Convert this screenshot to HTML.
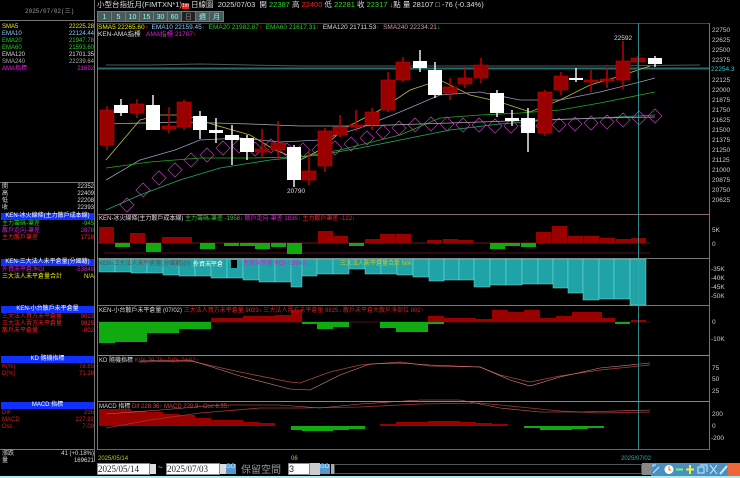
<!DOCTYPE html>
<html><head><meta charset="utf-8"><style>
*{margin:0;padding:0;box-sizing:border-box}
body{width:740px;height:478px;background:#000;overflow:hidden;position:relative;font-family:"Liberation Sans","Noto Sans CJK TC",sans-serif;color:#ddd}
.a{position:absolute;white-space:nowrap}
.s{font-size:6px;line-height:7px;font-family:"Liberation Mono","Noto Sans CJK TC",monospace}
.hd{position:absolute;left:1px;width:93px;height:7px;background:#1030ff;color:#fff;font-size:6px;line-height:7px;text-align:center}
.row{position:absolute;left:2px;width:92px;font-size:6px;line-height:7px}
.row b{font-weight:normal;float:right}
.btn{position:absolute;top:11px;width:15px;height:11px;background:#4a5a5a;color:#8fe;font-size:7px;line-height:11px;text-align:center;border:1px solid #777}
</style></head><body>
<div class="a" style="left:0;top:0;width:95px;height:462px;border-right:1px solid #777"></div>
<div class="a" style="left:0;top:20px;width:95px;height:1px;background:#777"></div>
<div class="a s" style="left:25px;top:8px;color:#999">2025/07/02(三)</div>
<div class="row" style="top:24px;color:#ee0">SMA5<b>22225.28</b></div>
<div class="row" style="top:31px;color:#8cf">EMA10<b>22124.44</b></div>
<div class="row" style="top:38px;color:#2c2">EMA20<b>21947.78</b></div>
<div class="row" style="top:45px;color:#2c2">EMA60<b>21593.60</b></div>
<div class="row" style="top:52px;color:#ddd">EMA120<b>21701.35</b></div>
<div class="row" style="top:59px;color:#aaa">SMA240<b>22239.64</b></div>
<div class="row" style="top:66px;color:#d2d">AMA指標<b>21692</b></div>
<div class="a" style="left:0;top:182px;width:95px;height:1px;background:#777"></div>
<div class="row" style="top:184px">開<b>22352</b></div>
<div class="row" style="top:191px">高<b>22409</b></div>
<div class="row" style="top:198px">低<b>22208</b></div>
<div class="row" style="top:205px">收<b>22393</b></div>
<div class="hd" style="top:213px">KEN-冰火線條(主力散戶成本線)</div>
<div class="row" style="top:221px;color:#2c2">主力籌碼-筆差<b>-945</b></div>
<div class="row" style="top:228px;color:#c2c">散戶走向-筆差<b>2878</b></div>
<div class="row" style="top:235px;color:#e22">主力散戶筆差<b>1728</b></div>
<div class="hd" style="top:259px">KEN-三大法人未平倉量(分國籍)</div>
<div class="row" style="top:267px;color:#c2c">外資未平倉淨OI<b>-53848</b></div>
<div class="row" style="top:274px;color:#ee0">三大法人未平倉量合計<b>N/A</b></div>
<div class="hd" style="top:306px">KEN-小台散戶未平倉量</div>
<div class="row" style="top:314px;color:#e22">三大法人買方未平倉量<b>9023</b></div>
<div class="row" style="top:321px;color:#e22">三大法人賣方未平倉量<b>9825</b></div>
<div class="row" style="top:328px;color:#e22">散戶未平倉量<b>-802</b></div>
<div class="hd" style="top:356px">KD 隨機指標</div>
<div class="row" style="top:364px;color:#c22">K(%)<b>78.85</b></div>
<div class="row" style="top:371px;color:#c22">D(%)<b>71.38</b></div>
<div class="hd" style="top:402px">MACD 指標</div>
<div class="row" style="top:410px;color:#c22">DIF<b>235</b></div>
<div class="row" style="top:417px;color:#c22">MACD<b>227.92</b></div>
<div class="row" style="top:424px;color:#c22">Osc<b>7.09</b></div>
<div class="a" style="left:0;top:449px;width:95px;height:1px;background:#777"></div>
<div class="row" style="top:451px">漲跌<b>41 (+0.18%)</b></div>
<div class="row" style="top:458px">量<b>169621</b></div>

<div class="a" style="left:97px;top:0;font-size:7.5px;line-height:9px;color:#ddd">小型台指近月(FIMTXN*1)<span style="background:#d22;color:#fff;font-size:5px">1m</span> 日線圖 &nbsp;2025/07/03 &nbsp;開 <span style="color:#2d2">22387</span> 高 <span style="color:#e22">22400</span> 低 <span style="color:#2d2">22281</span> 收 <span style="color:#2d2">22317</span> <span style="color:#2d2">↓</span>點 量 28107 □ -76 (-0.34%)</div>
<div class="btn" style="left:97px">1</div><div class="btn" style="left:111px">5</div><div class="btn" style="left:125px">10</div><div class="btn" style="left:139px">15</div><div class="btn" style="left:153px">30</div><div class="btn" style="left:167px">60</div><div class="btn" style="left:181px;background:#222;color:#888">日</div><div class="btn" style="left:195px">週</div><div class="btn" style="left:209px">月</div>

<div class="a" style="left:98px;top:24px;font-size:6.5px;line-height:7px"><span style="color:#ee0">SMA5 22265.60</span><span style="color:#e22">↑</span> &nbsp;<span style="color:#8cf">EMA10 22159.45</span><span style="color:#e22">↑</span> &nbsp;<span style="color:#2c2">EMA20 21982.87</span><span style="color:#e22">↑</span> &nbsp;<span style="color:#2c2">EMA60 21617.31</span><span style="color:#e22">↑</span> &nbsp;<span style="color:#ddd">EMA120 21711.53</span><span style="color:#e22">↑</span> &nbsp;<span style="color:#c9a">SMA240 22234.21</span><span style="color:#2c2">↓</span></div>
<div class="a" style="left:98px;top:31px;font-size:6.5px;line-height:7px">KEN-AMA指標 &nbsp;&nbsp;<span style="color:#d2d">AMA指標 21707</span><span style="color:#e22">↑</span></div>

<svg class="a" style="left:0;top:0" width="740" height="478" viewBox="0 0 740 478">
<g stroke="#666" fill="none">
<line x1="97" y1="23.5" x2="710" y2="23.5" stroke="#634"/>
<line x1="97" y1="214.5" x2="710" y2="214.5" stroke="#867"/>
<line x1="97" y1="258.5" x2="710" y2="258.5" stroke="#777"/>
<line x1="97" y1="305.5" x2="710" y2="305.5" stroke="#777"/>
<line x1="97" y1="355.5" x2="710" y2="355.5" stroke="#888"/>
<line x1="97" y1="401.5" x2="710" y2="401.5" stroke="#888"/>
<line x1="97" y1="449.5" x2="710" y2="449.5" stroke="#666"/>
<line x1="97.5" y1="23" x2="97.5" y2="450" stroke="#777"/>
<line x1="709.5" y1="23" x2="709.5" y2="450" stroke="#777"/>
</g>
<polyline points="106,65 150,65 200,64 300,66 370,66 600,66 700,65" stroke="#555" fill="none"/>
<line x1="98" y1="68.5" x2="709" y2="68.5" stroke="#1a7070" stroke-width="2"/>
<g stroke="#a3a" fill="none" stroke-width=".8">
<path d="M120,205l7-7 7,7-7,7z M136,190l7-7 7,7-7,7z M152,178l7-7 7,7-7,7z M168,170l7-7 7,7-7,7z M184,160l7-7 7,7-7,7z M200,155l7-7 7,7-7,7z M216,148l7-7 7,7-7,7z M232,146l7-7 7,7-7,7z M248,149l7-7 7,7-7,7z M264,146l7-7 7,7-7,7z M280,150l7-7 7,7-7,7z M296,150l7-7 7,7-7,7z M312,150l7-7 7,7-7,7z M328,148l7-7 7,7-7,7z M344,144l7-7 7,7-7,7z M360,138l7-7 7,7-7,7z M376,132l7-7 7,7-7,7z M392,128l7-7 7,7-7,7z M408,125l7-7 7,7-7,7z M424,124l7-7 7,7-7,7z M440,124l7-7 7,7-7,7z M456,125l7-7 7,7-7,7z M472,125l7-7 7,7-7,7z M488,126l7-7 7,7-7,7z M504,126l7-7 7,7-7,7z M520,126l7-7 7,7-7,7z M536,126l7-7 7,7-7,7z M552,125l7-7 7,7-7,7z M568,124l7-7 7,7-7,7z M584,123l7-7 7,7-7,7z M600,122l7-7 7,7-7,7z M616,120l7-7 7,7-7,7z M632,118l7-7 7,7-7,7z M648,116l7-7 7,7-7,7z"/>
</g>
<g fill="none" stroke-width=".8">
<polyline stroke="#bb4" points="106,160 140,120 160,115 185,115 215,125 250,135 275,150 300,160 320,150 345,128 380,110 410,90 440,80 470,95 500,102 530,112 560,100 590,85 620,76 650,66"/>
<polyline stroke="#99b" points="106,180 140,160 175,150 200,140 240,138 280,142 320,140 360,128 400,112 440,95 480,92 520,100 560,100 600,92 640,82 655,78"/>
<polyline stroke="#2a2" points="106,168 150,162 200,158 250,158 300,157 340,150 400,135 440,118 480,115 520,113 560,110 600,103 640,95 655,92"/>
<polyline stroke="#2a6" points="106,210 140,195 180,180 220,168 270,160 320,155 360,148 400,140 450,130 500,124 550,120 600,118 655,115"/>
<polyline stroke="#aaa" points="106,124 180,122 250,124 300,126 360,126 420,124 480,122 540,120 600,118 655,117"/>
</g>
<g stroke-width="1.4">
<g stroke="#c00"><line x1="107" y1="106" x2="107" y2="150"/><line x1="137" y1="99" x2="137" y2="118"/><line x1="169" y1="107" x2="169" y2="133"/><line x1="184" y1="100" x2="184" y2="130"/><line x1="262" y1="129" x2="262" y2="158"/><line x1="278" y1="121" x2="278" y2="160"/><line x1="309" y1="152" x2="309" y2="185"/><line x1="325" y1="128" x2="325" y2="172"/><line x1="340" y1="115" x2="340" y2="137"/><line x1="356" y1="110" x2="356" y2="131"/><line x1="372" y1="108" x2="372" y2="130"/><line x1="388" y1="72" x2="388" y2="112"/><line x1="403" y1="57" x2="403" y2="82"/><line x1="450" y1="78" x2="450" y2="100"/><line x1="465" y1="67" x2="465" y2="88"/><line x1="481" y1="58" x2="481" y2="83"/><line x1="545" y1="90" x2="545" y2="136"/><line x1="561" y1="72" x2="561" y2="95"/><line x1="591" y1="70" x2="591" y2="92"/><line x1="607" y1="68" x2="607" y2="88"/><line x1="623" y1="41" x2="623" y2="89"/><line x1="638" y1="56" x2="638" y2="78"/></g>
<g stroke="#fff"><line x1="121" y1="99" x2="121" y2="116"/><line x1="153" y1="95" x2="153" y2="130"/><line x1="200" y1="111" x2="200" y2="139"/><line x1="216" y1="118" x2="216" y2="143"/><line x1="232" y1="125" x2="232" y2="165"/><line x1="247" y1="135" x2="247" y2="160"/><line x1="294" y1="145" x2="294" y2="187"/><line x1="420" y1="50" x2="420" y2="72"/><line x1="435" y1="62" x2="435" y2="98"/><line x1="497" y1="90" x2="497" y2="117"/><line x1="512" y1="110" x2="512" y2="126"/><line x1="528" y1="108" x2="528" y2="152"/><line x1="576" y1="68" x2="576" y2="82"/><line x1="655" y1="56" x2="655" y2="67"/></g>
</g>
<g fill="#900" stroke="#c00" stroke-width=".6">
<rect x="100" y="110" width="14" height="35"/><rect x="130" y="104" width="14" height="9"/><rect x="162" y="126" width="14" height="3"/><rect x="177" y="102" width="14" height="25"/><rect x="255" y="149" width="14" height="3"/><rect x="271" y="143" width="14" height="7"/><rect x="302" y="171" width="14" height="9"/><rect x="318" y="131" width="14" height="35"/><rect x="333" y="127" width="14" height="8"/><rect x="349" y="125" width="14" height="2"/><rect x="365" y="112" width="14" height="13"/><rect x="381" y="80" width="14" height="30"/><rect x="396" y="62" width="14" height="18"/><rect x="443" y="87" width="14" height="6"/><rect x="458" y="78" width="14" height="6"/><rect x="474" y="65" width="14" height="13"/><rect x="538" y="92" width="14" height="41"/><rect x="554" y="76" width="14" height="14"/><rect x="584" y="80" width="14" height="2"/><rect x="600" y="79" width="14" height="2"/><rect x="616" y="61" width="14" height="19"/><rect x="631" y="58" width="14" height="4"/>
</g>
<g fill="#fff">
<rect x="114" y="105" width="14" height="8"/><rect x="146" y="105" width="14" height="25"/><rect x="193" y="116" width="14" height="14"/><rect x="209" y="130" width="14" height="3"/><rect x="225" y="135" width="14" height="5"/><rect x="240" y="138" width="14" height="14"/><rect x="287" y="147" width="14" height="33"/><rect x="413" y="61" width="14" height="7"/><rect x="428" y="70" width="14" height="25"/><rect x="490" y="93" width="14" height="20"/><rect x="505" y="118" width="14" height="3"/><rect x="521" y="118" width="14" height="15"/><rect x="569" y="78" width="14" height="2"/><rect x="648" y="58" width="14" height="6"/>
</g>
<text x="287" y="193" fill="#ddd" font-size="6.5" font-family="Liberation Sans">20790</text>
<text x="614" y="40" fill="#ddd" font-size="6.5" font-family="Liberation Sans">22592</text>

<line x1="98" y1="243" x2="650" y2="243" stroke="#c33" stroke-width=".6"/>
<line x1="104" y1="253" x2="650" y2="253" stroke="#a24" stroke-width=".6"/>
<g fill="#900"><rect x="99" y="227" width="15" height="16"/><rect x="130" y="233" width="15" height="10"/><rect x="162" y="237" width="15" height="6"/><rect x="177" y="237" width="15" height="6"/><rect x="318" y="231" width="15" height="12"/><rect x="333" y="236" width="15" height="7"/><rect x="365" y="239" width="15" height="4"/><rect x="380" y="234" width="15" height="9"/><rect x="396" y="234" width="15" height="9"/><rect x="427" y="240" width="15" height="3"/><rect x="443" y="239" width="15" height="4"/><rect x="458" y="240" width="15" height="3"/><rect x="536" y="232" width="15" height="11"/><rect x="552" y="226" width="15" height="17"/><rect x="568" y="236" width="15" height="7"/><rect x="584" y="236" width="15" height="7"/><rect x="600" y="238" width="15" height="5"/><rect x="616" y="239" width="15" height="4"/><rect x="631" y="238" width="15" height="5"/></g>
<g fill="#1a1"><rect x="115" y="243" width="15" height="4"/><rect x="146" y="243" width="15" height="9"/><rect x="200" y="243" width="15" height="6"/><rect x="224" y="243" width="15" height="3"/><rect x="240" y="243" width="15" height="3"/><rect x="255" y="243" width="15" height="6"/><rect x="271" y="243" width="15" height="4"/><rect x="287" y="243" width="15" height="11"/><rect x="349" y="243" width="15" height="3"/><rect x="490" y="243" width="15" height="6"/><rect x="505" y="243" width="15" height="3"/><rect x="521" y="243" width="15" height="4"/></g>
<text x="99" y="220" font-size="6" fill="#ddd" font-family="Liberation Sans,Noto Sans CJK TC">KEN-冰火線條(主力散戶成本線) <tspan fill="#2c2">  主力籌碼-筆差 -1958↓</tspan><tspan fill="#c2c">  散戶走向-筆差 1836↓</tspan><tspan fill="#e22">  主力散戶筆差 -122↓</tspan></text>

<g fill="#1fa3a6" stroke="#7dd" stroke-width=".5">
<rect x="99" y="259" width="16" height="13"/><rect x="115" y="259" width="16" height="13"/><rect x="131" y="259" width="16" height="14"/><rect x="147" y="259" width="16" height="14"/><rect x="163" y="259" width="16" height="16"/><rect x="179" y="259" width="16" height="17"/><rect x="195" y="259" width="16" height="17"/><rect x="211" y="259" width="16" height="19"/><rect x="227" y="259" width="16" height="19"/><rect x="243" y="259" width="16" height="21"/><rect x="259" y="259" width="16" height="23"/><rect x="275" y="259" width="16" height="23"/><rect x="291" y="259" width="11" height="28"/><rect x="302" y="259" width="15" height="17"/><rect x="317" y="259" width="16" height="15"/><rect x="333" y="259" width="16" height="15"/><rect x="349" y="259" width="16" height="10"/><rect x="365" y="259" width="16" height="15"/><rect x="381" y="259" width="16" height="15"/><rect x="397" y="259" width="16" height="16"/><rect x="413" y="259" width="16" height="18"/><rect x="429" y="259" width="15" height="22"/><rect x="444" y="259" width="15" height="21"/><rect x="459" y="259" width="15" height="21"/><rect x="474" y="259" width="16" height="28"/><rect x="490" y="259" width="16" height="26"/><rect x="506" y="259" width="16" height="26"/><rect x="522" y="259" width="16" height="25"/><rect x="538" y="259" width="15" height="25"/><rect x="553" y="259" width="15" height="29"/><rect x="568" y="259" width="15" height="34"/><rect x="583" y="259" width="16" height="41"/><rect x="599" y="259" width="15" height="40"/><rect x="614" y="259" width="16" height="40"/><rect x="630" y="259" width="16" height="46"/>
</g>
<text x="99" y="265" font-size="6" fill="#555" font-family="Liberation Sans,Noto Sans CJK TC">KEN-三大法人未平倉量(分國籍)(0)</text>
<text x="193" y="266" font-size="6" fill="#fff" font-family="Liberation Sans,Noto Sans CJK TC">外資未平倉</text>
<rect x="231" y="260" width="6" height="8" fill="#000"/>
<text x="243" y="265" font-size="6" fill="#c2c" font-family="Liberation Sans,Noto Sans CJK TC">外資未平倉淨OI -53848↓</text>
<text x="340" y="265" font-size="6" fill="#cc2" font-family="Liberation Sans,Noto Sans CJK TC">三大法人未平倉量合計 N/A</text>

<line x1="98" y1="322" x2="650" y2="322" stroke="#a22" stroke-width=".5"/>
<g fill="#1a1"><rect x="99" y="322" width="16" height="21"/><rect x="115" y="322" width="16" height="20"/><rect x="131" y="322" width="16" height="20"/><rect x="147" y="322" width="16" height="11"/><rect x="163" y="322" width="16" height="11"/><rect x="179" y="322" width="16" height="7"/><rect x="195" y="322" width="16" height="7"/><rect x="302" y="322" width="15" height="2"/><rect x="317" y="322" width="16" height="7"/><rect x="333" y="322" width="16" height="5"/><rect x="380" y="322" width="16" height="6"/><rect x="396" y="322" width="16" height="10"/><rect x="412" y="322" width="16" height="10"/><rect x="428" y="322" width="16" height="2"/><rect x="615" y="322" width="15" height="2"/></g>
<g fill="#900"><rect x="211" y="318" width="16" height="4"/><rect x="227" y="318" width="16" height="4"/><rect x="243" y="316" width="16" height="6"/><rect x="259" y="316" width="16" height="6"/><rect x="275" y="315" width="16" height="7"/><rect x="291" y="310" width="11" height="12"/><rect x="428" y="316" width="16" height="6"/><rect x="444" y="318" width="16" height="4"/><rect x="460" y="318" width="16" height="4"/><rect x="476" y="319" width="16" height="3"/><rect x="492" y="310" width="16" height="12"/><rect x="508" y="312" width="16" height="10"/><rect x="524" y="310" width="16" height="12"/><rect x="540" y="318" width="16" height="4"/><rect x="556" y="316" width="16" height="6"/><rect x="572" y="312" width="15" height="10"/><rect x="587" y="312" width="15" height="10"/><rect x="602" y="318" width="13" height="4"/><rect x="631" y="320" width="15" height="2"/></g>
<text x="99" y="312" font-size="6" fill="#ddd" font-family="Liberation Sans,Noto Sans CJK TC">KEN-小台散戶未平倉量 (07/02) <tspan fill="#e22">  三大法人買方未平倉量 9023↓</tspan><tspan fill="#c22">  三大法人賣方未平倉量 9825↓</tspan><tspan fill="#c22">  散戶未平倉大散戶淨部位 802↑</tspan></text>

<polyline fill="none" stroke="#a44" stroke-width=".8" points="140,362 190,361 240,372 290,382 300,383 330,372 360,365 400,362 430,366 480,367 500,375 530,382 560,376 600,370 630,367 650,365"/>
<polyline fill="none" stroke="#d88" stroke-width=".6" points="140,361 190,360 240,376 290,389 310,390 340,375 370,364 400,363 430,365 480,367 510,380 530,386 560,377 600,368 650,363"/>
<text x="99" y="362" font-size="6" fill="#ddd" font-family="Liberation Sans,Noto Sans CJK TC">KD 隨機指標 <tspan fill="#c22">  K(9) 79.78↑   D(9) 74.02↑</tspan></text>

<g fill="#900"><rect x="99" y="409" width="16" height="17"/><rect x="115" y="409" width="16" height="17"/><rect x="131" y="411" width="16" height="15"/><rect x="147" y="412" width="16" height="14"/><rect x="163" y="414" width="16" height="12"/><rect x="179" y="415" width="16" height="11"/><rect x="195" y="418" width="16" height="8"/><rect x="211" y="420" width="16" height="6"/><rect x="227" y="420" width="16" height="6"/><rect x="243" y="422" width="16" height="4"/><rect x="259" y="423" width="16" height="3"/><rect x="380" y="424" width="16" height="2"/><rect x="396" y="422" width="16" height="4"/><rect x="412" y="422" width="16" height="4"/><rect x="428" y="421" width="16" height="5"/><rect x="444" y="421" width="16" height="5"/><rect x="460" y="422" width="16" height="4"/><rect x="476" y="423" width="16" height="3"/><rect x="492" y="424" width="16" height="2"/></g>
<g fill="#1a1"><rect x="291" y="426" width="11" height="4"/><rect x="302" y="426" width="15" height="5"/><rect x="317" y="426" width="16" height="5"/><rect x="333" y="426" width="16" height="4"/><rect x="349" y="426" width="16" height="3"/><rect x="524" y="426" width="16" height="2"/><rect x="540" y="426" width="16" height="4"/><rect x="556" y="426" width="16" height="4"/><rect x="572" y="426" width="16" height="3"/><rect x="588" y="426" width="16" height="2"/></g>
<polyline fill="none" stroke="#a33" stroke-width=".8" points="106,428 150,420 200,413 260,408 300,408 360,407 420,404 480,403 520,407 560,411 600,413 650,412"/>
<polyline fill="none" stroke="#c66" stroke-width=".6" points="106,414 160,410 220,405 280,405 320,408 360,404 420,400 460,400 500,408 540,412 580,412 650,410"/>
<text x="99" y="408" font-size="6" fill="#ddd" font-family="Liberation Sans,Noto Sans CJK TC">MACD 指標 <tspan fill="#c44">  Dif 228.36↑   MACD 220.9↑   Osc 8.35↑</tspan></text>

<line x1="638.5" y1="23" x2="638.5" y2="450" stroke="#3aa" stroke-width=".8"/>
<g fill="#ccc" font-size="6.5" font-family="Liberation Sans">
<text x="712" y="32">22750</text><text x="712" y="42">22625</text><text x="712" y="52">22500</text><text x="712" y="62">22375</text><text x="712" y="92">22000</text><text x="712" y="102">21875</text><text x="712" y="112">21750</text><text x="712" y="122">21625</text><text x="712" y="132">21500</text><text x="712" y="142">21375</text><text x="712" y="152">21250</text><text x="712" y="162">21125</text><text x="712" y="172">21000</text><text x="712" y="182">20875</text><text x="712" y="192">20750</text><text x="712" y="202">20625</text>
<text x="712" y="82">22125</text>
<rect x="710" y="65" width="30" height="8" fill="#000"/><text x="711" y="71" fill="#3cc">22254.3</text>
<text x="712" y="232">5K</text><text x="712" y="246">0</text>
<text x="711" y="271">-35K</text><text x="711" y="280">-40K</text><text x="711" y="289">-45K</text><text x="711" y="298">-50K</text>
<text x="712" y="324">0</text><text x="711" y="341">-10K</text>
<text x="712" y="370">75</text><text x="712" y="381">50</text><text x="712" y="393">25</text>
<text x="712" y="416">200</text><text x="712" y="428">0</text><text x="711" y="440">-200</text>
</g>
<g font-size="6" font-family="Liberation Sans"><text x="98" y="460" fill="#bc2">2025/05/14</text><text x="291" y="460" fill="#bc2">06</text><text x="621" y="460" fill="#3aa">2025/07/02</text></g>
</svg>

<div class="a" style="left:97px;top:463px;width:53px;height:12px;background:#fff;border:1px solid #888;color:#222;font-size:9px;line-height:11px;font-family:'Liberation Serif',serif">2025/05/14</div>
<div class="a" style="left:150px;top:464px;width:6px;height:10px;background:#ddd"></div>
<div class="a" style="left:158px;top:463px;color:#ccc;font-size:8px">~</div>
<div class="a" style="left:166px;top:463px;width:54px;height:12px;background:#fff;border:1px solid #888;color:#222;font-size:9px;line-height:11px;font-family:'Liberation Serif',serif">2025/07/03</div>
<div class="a" style="left:220px;top:464px;width:6px;height:10px;background:#ddd"></div>
<div class="a" style="left:226px;top:464px;width:10px;height:10px;background:#59c;font-size:6px;color:#cef">GO</div>
<div class="a" style="left:241px;top:462px;color:#999;font-size:10px;font-family:'Noto Sans CJK TC',sans-serif;line-height:14px">保留空間</div>
<div class="a" style="left:288px;top:463px;width:22px;height:12px;background:#fff;border:1px solid #888;color:#222;font-size:9px;line-height:11px">3</div>
<div class="a" style="left:310px;top:463px;width:10px;height:12px;background:#ccc"></div>
<div class="a" style="left:320px;top:464px;width:10px;height:10px;background:#59c;font-size:6px;color:#cef">GO</div>
<div class="a" style="left:331px;top:464px;width:3px;height:10px;background:#aaa"></div>
<div class="a" style="left:334px;top:464px;width:308px;height:10px;background:#000;border:1px solid #555"></div>
<div class="a" style="left:642px;top:463px;width:9px;height:12px;background:#888"></div>
<div class="a" style="left:651px;top:463px;width:89px;height:13px;background:#4a8fc0"></div>
<svg class="a" style="left:651px;top:463px" width="89" height="13" viewBox="0 0 89 13">
<path d="M2,10 L8,4 M2,4 L2,2 L5,2" stroke="#cef" fill="none"/>
<circle cx="18" cy="6.5" r="4.5" fill="#fff"/><path d="M18,3v4h2" stroke="#e63" fill="none"/>
<rect x="25" y="5.5" width="7" height="2" fill="#6f6"/>
<path d="M39,2v9M35,6.5h8" stroke="#ee3" stroke-width="2"/>
<path d="M47,10V4h6v6z M49,2h7v7" stroke="#cef" fill="none"/>
<path d="M59,2l7,9M66,2l-7,9" stroke="#cef"/>
<path d="M69,11l7-8" stroke="#cef" stroke-width="2"/>
</svg>
<div class="a" style="left:728px;top:463px;width:12px;height:13px;background:#e63"></div>
<div class="a" style="left:0;top:476px;width:740px;height:2px;background:#aee"></div>
</body></html>
